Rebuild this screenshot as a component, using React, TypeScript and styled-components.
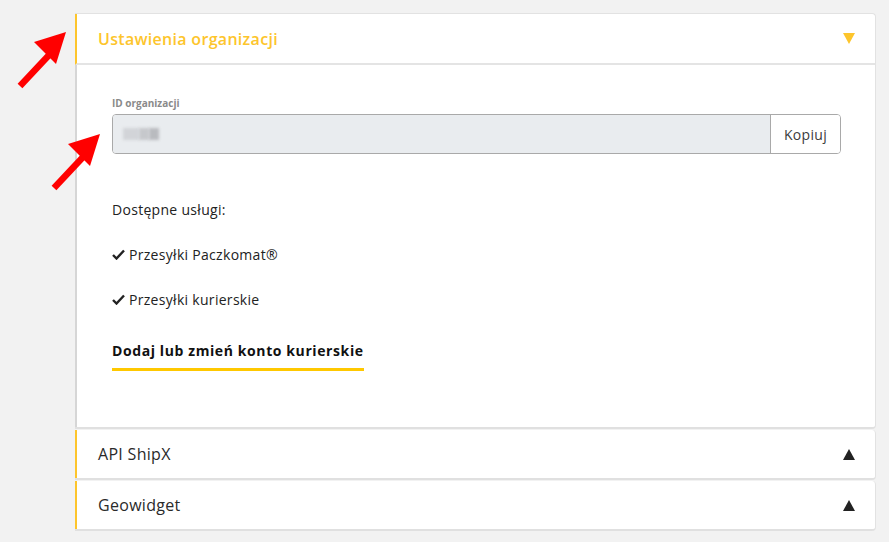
import React from 'react';
import styled, { createGlobalStyle } from 'styled-components';

const GlobalStyle = createGlobalStyle`
	html, body {
		margin: 0;
		padding: 0;
		background: #f2f2f2;
		font-family: 'Open Sans', 'Liberation Sans', sans-serif;
		color: #222;
	}
`;

const YELLOW = '#fdc52c';

const Page = styled.div`
	position: relative;
	width: 889px;
	height: 542px;
	padding: 13px 13px 0 75px;
	box-sizing: border-box;
	overflow: hidden;
`;

const Accordion = styled.div`
	display: flex;
	flex-direction: column;
	gap: 1px;
`;

const Section = styled.div<{ $first?: boolean }>`
	background: #fff;
	border-top: ${({ $first }) => ($first ? '1px solid #e2e2e2' : 'none')};
	border-right: 1px solid #e2e2e2;
	border-bottom: 2px solid #e0e0e0;
	border-radius: 0 4px 4px 0;
`;

const Header = styled.div<{ $open?: boolean }>`
	height: ${({ $open }) => ($open ? 49 : 48)}px;
	display: flex;
	align-items: center;
	justify-content: space-between;
	padding: 0 20px 0 21px;
	border-left: 2px solid ${YELLOW};
	border-bottom: ${({ $open }) => ($open ? '2px solid #e4e4e4' : 'none')};
	font-size: 16px;
	letter-spacing: 0.3px;
	font-weight: ${({ $open }) => ($open ? 600 : 400)};
	color: ${({ $open }) => ($open ? YELLOW : '#2a2a2a')};
`;

const Body = styled.div`
	border-left: 2px solid #d6d6d6;
	padding: 31px 34px 56px 35px;
	display: flex;
	flex-direction: column;
`;

const Label = styled.div`
	font-size: 10px;
	font-weight: 700;
	color: #8a8a8a;
	margin-bottom: 4px;
`;

const InputGroup = styled.div`
	display: flex;
	height: 40px;
	border: 1px solid #a9a9a9;
	border-radius: 4px;
	overflow: hidden;
	box-sizing: border-box;
`;

const Field = styled.div`
	flex: 1;
	background: #e9ecef;
	display: flex;
	align-items: center;
	padding-left: 10px;
`;

const Blur = styled.span<{ $w: number; $c: string }>`
	display: inline-block;
	width: ${({ $w }) => $w}px;
	height: 12px;
	background: ${({ $c }) => $c};
	filter: blur(1.5px);
`;

const CopyButton = styled.button`
	width: 70px;
	border: none;
	border-left: 1px solid #a9a9a9;
	background: #fff;
	font-family: inherit;
	font-size: 14px;
	letter-spacing: 0.3px;
	color: #3c3c3c;
	padding: 0;
`;

const Heading = styled.div`
	font-size: 14px;
	letter-spacing: 0.3px;
	margin-top: 46px;
`;

const Service = styled.div`
	font-size: 14px;
	letter-spacing: 0.3px;
	margin-top: 26px;
	display: flex;
	align-items: center;
	gap: 4px;
`;

const LinkText = styled.a`
	align-self: flex-start;
	margin-top: 32px;
	font-size: 14px;
	font-weight: 700;
	letter-spacing: 0.6px;
	color: #111;
	padding-bottom: 8px;
	border-bottom: 3px solid #ffc800;
	text-decoration: none;
`;

const Arrow = styled.svg<{ $x: number; $y: number }>`
	position: absolute;
	left: ${({ $x }) => $x}px;
	top: ${({ $y }) => $y}px;
`;

const Caret = ({ up, color }: { up?: boolean; color: string }) => (
	<svg width="12" height="11" viewBox="0 0 12 11">
		<path d={up ? 'M6 0L12 11H0Z' : 'M0 0H12L6 11Z'} fill={color} />
	</svg>
);

const Check = () => (
	<svg width="13" height="11" viewBox="0 0 13 11">
		<path d="M1 6l3.5 3.5L12 1.5" stroke="#222" strokeWidth="2.4" fill="none" />
	</svg>
);

const RedArrow = ({ x, y }: { x: number; y: number }) => (
	<Arrow $x={x} $y={y} width="54" height="60" viewBox="0 0 54 60">
		<line x1="4" y1="56" x2="34" y2="24" stroke="#f00" strokeWidth="6.5" />
		<path d="M18 12L50 2L40 34Z" fill="#f00" />
	</Arrow>
);

export default function App() {
	return (
		<>
			<GlobalStyle />
			<Page>
				<Accordion>
					<Section $first>
						<Header $open>
							<span>Ustawienia organizacji</span>
							<Caret color={YELLOW} />
						</Header>
						<Body>
							<Label>ID organizacji</Label>
							<InputGroup>
								<Field>
									<Blur $w={16} $c="#d2d4d8" />
									<Blur $w={10} $c="#c6c8cc" />
									<Blur $w={10} $c="#b9bbbf" />
								</Field>
								<CopyButton>Kopiuj</CopyButton>
							</InputGroup>
							<Heading>Dostępne usługi:</Heading>
							<Service>
								<Check />
								Przesyłki Paczkomat®
							</Service>
							<Service>
								<Check />
								Przesyłki kurierskie
							</Service>
							<LinkText href="#">Dodaj lub zmień konto kurierskie</LinkText>
						</Body>
					</Section>
					<Section>
						<Header>
							<span>API ShipX</span>
							<Caret up color="#222" />
						</Header>
					</Section>
					<Section>
						<Header>
							<span>Geowidget</span>
							<Caret up color="#222" />
						</Header>
					</Section>
				</Accordion>
				<RedArrow x={16} y={30} />
				<RedArrow x={50} y={132} />
			</Page>
		</>
	);
}
